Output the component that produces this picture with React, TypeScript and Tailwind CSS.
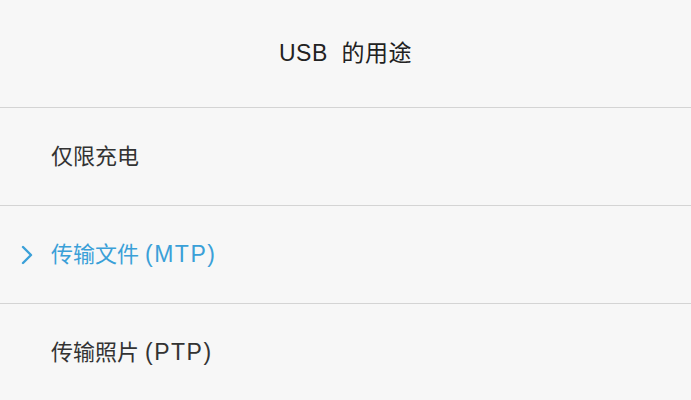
import React from 'react';

const options = [
  { label: '仅限充电', tag: '', active: false },
  { label: '传输文件', tag: '(MTP)', active: true },
  { label: '传输照片', tag: '(PTP)', active: false },
];

export default function App() {
  return (
    <div
      className="w-[691px] h-[400px] overflow-hidden bg-[#f7f7f7] text-[#222]"
      style={{ fontFamily: '"Liberation Sans", "Noto Sans CJK SC", sans-serif' }}
    >
      <div className="h-[108px] flex items-center justify-center border-b border-[#d4d4d4]">
        <span className="text-[23px] tracking-[0.5px]">USB&nbsp; 的用途</span>
      </div>
      {options.map((o) => (
        <div
          key={o.label}
          className="h-[98px] flex items-center border-b border-[#d4d4d4] relative"
        >
          {o.active && (
            <svg
              className="absolute left-[19px] top-1/2 -translate-y-1/2"
              width="15"
              height="22"
              viewBox="0 0 15 22"
              fill="none"
            >
              <path d="M4 3 L12 11 L4 19" stroke="#3aa0d8" strokeWidth="2.4" strokeLinecap="round" strokeLinejoin="round" />
            </svg>
          )}
          <span
            className={`ml-[51px] text-[22px] ${o.active ? 'text-[#3aa0d8]' : 'text-[#333]'}`}
          >
            {o.label}
            {o.tag && (
              <span className="ml-[6px] text-[23px] tracking-[1.5px]">{o.tag}</span>
            )}
          </span>
        </div>
      ))}
    </div>
  );
}
